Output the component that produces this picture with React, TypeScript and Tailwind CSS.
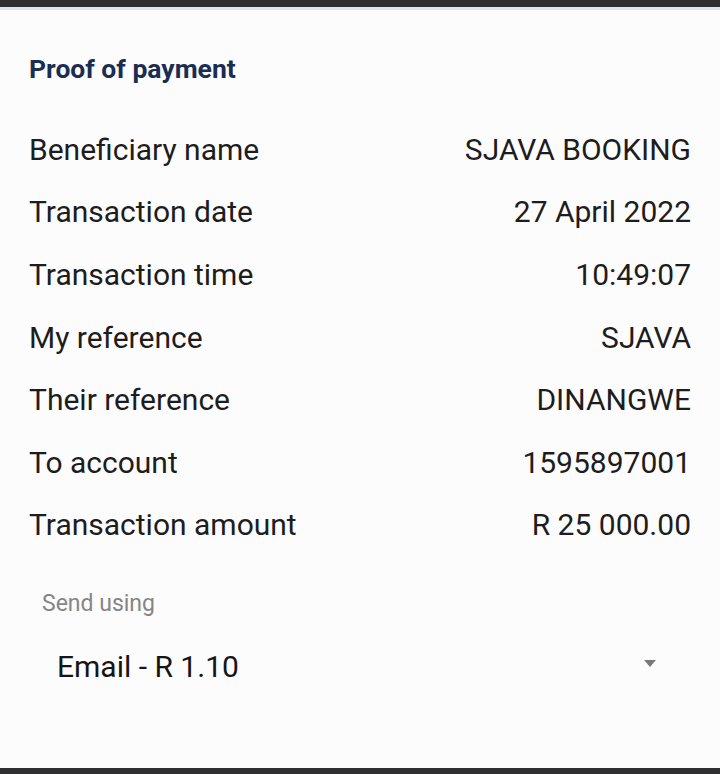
const rows = [
  { label: "Beneficiary name", value: "SJAVA BOOKING" },
  { label: "Transaction date", value: "27 April 2022" },
  { label: "Transaction time", value: "10:49:07" },
  { label: "My reference", value: "SJAVA" },
  { label: "Their reference", value: "DINANGWE" },
  { label: "To account", value: "1595897001" },
  { label: "Transaction amount", value: "R 25 000.00" },
];

export default function App() {
  return (
    <div className="flex h-[774px] w-[720px] flex-col bg-[#fdfcfd] font-['Roboto',sans-serif]">
      <div className="h-[7px] bg-[#2f2f31]" />
      <div className="h-[3px] bg-[#dbe7f3]" />
      <div className="flex-1 px-[29px]">
        <h1 className="mt-[44px] text-[26.5px] font-bold leading-[30px] text-[#1b2d52]">Proof of payment</h1>
        <div className="mt-[34px] flex flex-col">
          {rows.map((r) => (
            <div key={r.label} className="flex h-[62.6px] items-center justify-between text-[30px] text-[#1d1d1d]">
              <span>{r.label}</span>
              <span>{r.value}</span>
            </div>
          ))}
        </div>
        <div className="mt-[34px] pl-[13px] text-[23px] leading-[28px] text-[#858585]">Send using</div>
        <div className="mt-[31px] flex items-center justify-between pl-[28px] pr-[35px]">
          <span className="text-[30px] leading-[36px] text-[#151515]">Email - R 1.10</span>
          <svg width="12" height="7" viewBox="0 0 12 7" className="-mt-[8px]">
            <path d="M0 0h12L6 7z" fill="#7a7a7a" />
          </svg>
        </div>
      </div>
      <div className="h-[6px] bg-[#2f2f31]" />
    </div>
  );
}
